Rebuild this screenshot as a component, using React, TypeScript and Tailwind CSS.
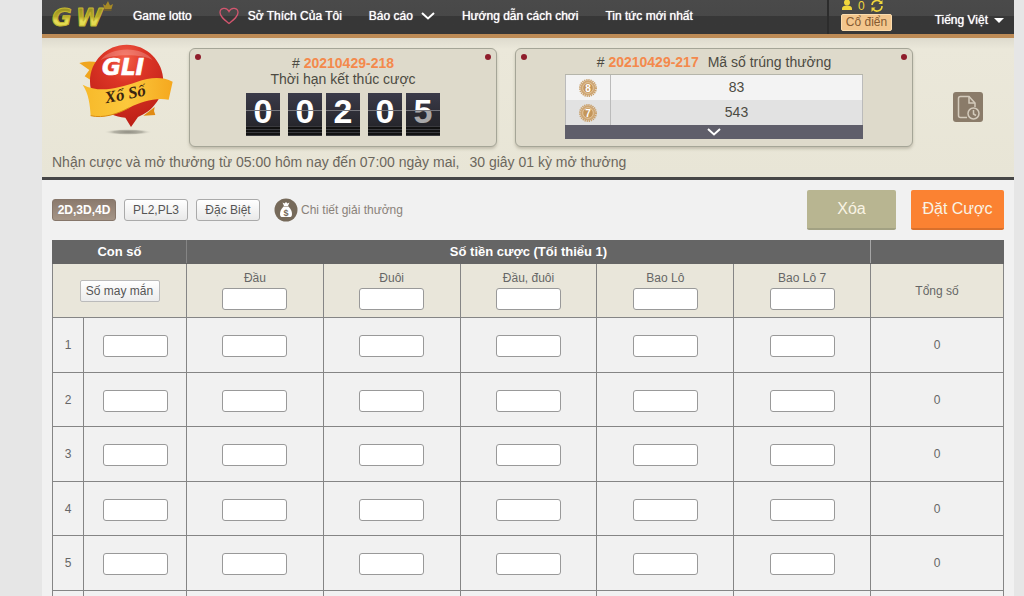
import React from "react";

const betTypes = ["Đầu", "Đuôi", "Đầu, đuôi", "Bao Lô", "Bao Lô 7"];
const rows = [1, 2, 3, 4, 5];

const inputClass =
  "block h-[22px] w-[65px] mx-auto rounded-[3px] border border-[#999] bg-white px-1 text-center text-xs text-[#444] outline-none";
const tabClass =
  "h-[22px] w-16 rounded-[3px] border border-[#aaa] bg-linear-to-b from-white to-[#e9e9e9] text-xs text-[#555] whitespace-nowrap";

function BrandLogo() {
  return (
    <svg className="w-[64px] h-[34px] shrink-0 overflow-visible" viewBox="0 0 64 34" aria-label="GW" role="img">
      <defs>
        <linearGradient id="gold" x1="0" y1="0" x2="0" y2="1">
          <stop offset="0" stopColor="#8d8420" />
          <stop offset="0.45" stopColor="#b5a928" />
          <stop offset="0.6" stopColor="#e8de58" />
          <stop offset="1" stopColor="#d9cf3c" />
        </linearGradient>
      </defs>
      <g
        fill="url(#gold)"
        stroke="#c3b730"
        strokeWidth="1"
        strokeLinejoin="round"
        className="text-[24px] font-bold italic font-['DejaVu_Sans',sans-serif]"
      >
        <text x="2" y="26">
          G
        </text>
        <text x="26" y="26">
          W
        </text>
      </g>
      <path d="M53 4l2.500 1.500L58 1l2 4.500L63 4l-1.500 5h-7z" fill="#a78a26" />
      <path d="M54 10h7.500" stroke="#8a6d1f" strokeWidth="1" />
    </svg>
  );
}

function LotteryBadge() {
  return (
    <svg className="w-[100px] h-[95px] shrink-0" viewBox="105 20 300 285" role="img" aria-label="GLI Xổ Số">
      <defs>
        <radialGradient id="ball" cx="0.48" cy="0.18" r="0.8">
          <stop offset="0" stopColor="#f4604a" />
          <stop offset="0.35" stopColor="#dc3526" />
          <stop offset="1" stopColor="#bd1f16" />
        </radialGradient>
        <linearGradient id="ribbon" x1="0" y1="0" x2="1" y2="0">
          <stop offset="0" stopColor="#f7b92a" />
          <stop offset="0.5" stopColor="#fcc83c" />
          <stop offset="1" stopColor="#f5a81f" />
        </linearGradient>
        <radialGradient id="shade">
          <stop offset="0" stopColor="#8d8b80" />
          <stop offset="0.6" stopColor="#b5b3a6" />
          <stop offset="1" stopColor="#e5e2d4" stopOpacity="0" />
        </radialGradient>
      </defs>
      <ellipse cx="264" cy="287" rx="72" ry="9" fill="url(#shade)" />
      <path d="M118 80Q140 72 176 78L166 140 134 120 148 101z" fill="#f0a51e" />
      <path d="M310 238l34-26-2 12 4 12z" fill="#e08a14" />
      <path
        d="M260 25C320 25 370 74 370 135C370 185 336 226 294 242L273 272L256 244C196 240 150 196 150 135C150 74 200 25 260 25z"
        fill="url(#ball)"
      />
      <path d="M182 72C210 30 310 28 338 72C310 52 214 52 182 72z" fill="#fff" opacity="0.22" />
      <text
        x="186"
        y="117"
        fill="#fff"
        stroke="#fff"
        strokeWidth="2"
        className="text-[69px] font-bold italic font-['DejaVu_Sans',sans-serif]"
      >
        GLI
      </text>
      <path
        d="M128 145C180 172 235 155 290 137C330 123 365 120 398 136L386 190C345 183 305 196 268 214C232 233 190 247 152 238C150 205 146 172 128 145z"
        fill="url(#ribbon)"
      />
      <path d="M152 238C190 247 232 233 268 214" stroke="#d98b12" strokeWidth="3" fill="none" />
      <text
        x="198"
        y="201"
        transform="rotate(-11 198 201)"
        fill="#3a2410"
        className="text-[50px] font-bold italic font-['Liberation_Serif',serif]"
      >
        Xổ Số
      </text>
    </svg>
  );
}

function Chevron({ className }: { className: string }) {
  return (
    <svg className={className} viewBox="0 0 14 8" fill="none" stroke="currentColor" strokeWidth="2">
      <path d="M1 1l6 5.500L13 1" />
    </svg>
  );
}

function Medal({ n }: { n: number }) {
  return (
    <svg className="w-5 h-5 mx-auto" viewBox="0 0 20 20">
      <circle cx="10" cy="10" r="8" fill="none" stroke="#c9a06b" strokeWidth="2" strokeDasharray="1.300 0.800" />
      <circle cx="10" cy="10" r="7.500" fill="#cfa672" />
      <circle cx="10" cy="10" r="5.300" fill="#c4965a" stroke="#ecd6b4" strokeWidth="0.700" />
      <text x="10" y="13.500" textAnchor="middle" fill="#fff" className="text-[10px] font-bold">
        {n}
      </text>
    </svg>
  );
}

function Digit({ value, flipping = false }: { value: string; flipping?: boolean }) {
  return (
    <span className="relative flex h-[43px] w-[34px] justify-center overflow-hidden bg-linear-to-b from-[#3b3b49] to-[#202024] text-[34px] leading-[36px] font-bold text-white">
      {value}
      {flipping && <span className="absolute inset-x-0 top-[18px] h-[14px] bg-[#26262a]/40" />}
      <span className="absolute inset-x-0 top-[17px] h-px bg-[#77777d]" />
      <span className="absolute inset-x-0 bottom-0 h-[10px] bg-[repeating-linear-gradient(to_bottom,#3a3a3e_0px,#3a3a3e_1px,#111_1px,#111_3px)]" />
    </span>
  );
}

function Pins() {
  return (
    <>
      <span className="absolute left-[5px] top-[5px] size-[6px] rounded-full bg-[#8f1d2c]" />
      <span className="absolute right-[5px] top-[5px] size-[6px] rounded-full bg-[#8f1d2c]" />
    </>
  );
}

const cardClass =
  "relative h-[99px] rounded-[6px] border border-[#a5a597] bg-[#dedacb] text-center text-sm leading-4 text-[#4c4a42] shadow-[0_2px_3px_rgba(120,115,95,0.35)]";

function TopBar() {
  return (
    <header className="flex h-[38px] border-b-4 border-[#bd8b56] bg-linear-to-b from-[#4a4a4a] from-0% via-[#484848] via-47% to-[#373737] to-48% pl-2 text-xs text-white">
      <BrandLogo />
      <nav className="ml-[19px] flex h-[31px] flex-1 items-center gap-[27px] whitespace-nowrap text-shadow-[0_0_1px_#fff]">
        <a href="#lotto">Game lotto</a>
        <a href="#favorites" className="flex items-center gap-[9px]">
          <svg className="w-5 h-[18px]" viewBox="0 0 20 18" fill="none" stroke="#d4566f" strokeWidth="1.300">
            <path d="M10 16.500C5 12.500 1 9.500 1 5.500C1 1 7.500-0.500 10 4.500C12.500-0.500 19 1 19 5.500C19 9.500 15 12.500 10 16.500z" />
          </svg>
          Sở Thích Của Tôi
        </a>
        <a href="#report" className="flex items-center gap-2">
          Báo cáo
          <Chevron className="w-[14px] h-2" />
        </a>
        <a href="#guide">Hướng dẫn cách chơi</a>
        <a href="#news">Tin tức mới nhất</a>
      </nav>
      <div className="flex w-[187px] border-l-2 border-[#2c2c2c] pl-3 pr-[10px]">
        <div className="flex-1">
          <div className="flex h-[14px] items-start gap-[5px] leading-[10px] text-[#f0d63c]">
            <svg className="h-[10px] w-3" viewBox="0 0 12 10" fill="currentColor">
              <circle cx="6" cy="2.500" r="3" />
              <path d="M1 10V8.500C1 6.500 3 5.500 6 5.500S11 6.500 11 8.500V10z" />
            </svg>
            <span className="text-xs leading-[14px] -mt-px">0</span>
            <svg className="h-3 w-[14px]" viewBox="0 0 14 12" fill="none" stroke="currentColor" strokeWidth="1.600">
              <path d="M2 5A5 5 0 0 1 11 2.500M12 6A5 5 0 0 1 3 9" />
              <path d="M12.500 0v4h-4zM1.500 12V7.500h4z" fill="currentColor" stroke="none" />
            </svg>
          </div>
          <button className="h-[17px] w-[51px] rounded-[2px] border border-[#fbdcae] bg-[#f3c68d] text-xs leading-[15px] text-[#855b32]">
            Cổ điển
          </button>
        </div>
        <button className="mt-[10px] flex h-5 items-center gap-[6px] whitespace-nowrap text-shadow-[0_0_1px_#fff]">
          Tiếng Việt
          <span className="border-x-[5px] border-t-[5px] border-x-transparent border-t-white" />
        </button>
      </div>
    </header>
  );
}

function DrawPanel() {
  return (
    <section className="h-[142px] border-b-[3px] border-[#464646] bg-linear-to-b from-[#dedbce] from-0% via-[#ebe8da] via-8% to-[#e8e5d6] px-[10px] pt-[5px]">
      <div className="flex h-[110px]">
        <div className="w-[137px] shrink-0 pl-[23px]">
          <LotteryBadge />
        </div>
        <div className={`${cardClass} mt-[5px] w-[308px] shrink-0 pt-[6px]`}>
          <Pins />
          <p>
            # <b className="text-[14px] text-[#f4894c]">20210429-218</b>
          </p>
          <p>Thời hạn kết thúc cược</p>
          <div className="mt-[6px] flex justify-center gap-2">
            <Digit value="0" />
            <div className="flex gap-1">
              <Digit value="0" />
              <Digit value="2" />
            </div>
            <div className="flex gap-1">
              <Digit value="0" />
              <Digit value="5" flipping />
            </div>
          </div>
        </div>
        <div className={`${cardClass} ml-[18px] mt-[5px] w-[398px] shrink-0 pt-[5px]`}>
          <Pins />
          <p>
            # <b className="text-[#f4894c]">20210429-217</b>
            <span className="ml-[9px]">Mã số trúng thưởng</span>
          </p>
          <div className="mx-auto mt-1 w-[298px] border-t border-[#b5b5aa]">
            <table className="w-full border-collapse">
              <tbody>
                <tr className="h-[25px] bg-[#f3f3f3]">
                  <td className="w-[45px] border-x border-[#bbb]">
                    <Medal n={8} />
                  </td>
                  <td className="border-r border-[#bbb] pb-[2px]">83</td>
                </tr>
                <tr className="h-[25px] bg-[#e2e2e2]">
                  <td className="border-x border-[#bbb]">
                    <Medal n={7} />
                  </td>
                  <td className="border-r border-[#bbb] pb-[2px]">543</td>
                </tr>
              </tbody>
            </table>
            <button aria-label="Xem thêm" className="flex h-[14px] w-full justify-center bg-[#5f5e6a] pt-[3px] text-white">
              <Chevron className="h-2 w-[14px]" />
            </button>
          </div>
        </div>
        <div className="flex flex-1 items-center justify-end pr-[21px] pt-[18px]">
          <button aria-label="Lịch sử" className="size-[30px] rounded-[3px] bg-[#8a7b69]">
            <svg className="size-[30px]" viewBox="0 0 30 30" fill="none" stroke="#d3cabb" strokeWidth="1.500">
              <path d="M14 25.500H7.500C6 25.500 5.500 25 5.500 23.500V6.500C5.500 5 6 4.500 7.500 4.500H16L22 11V15" />
              <path d="M16 4.500V11H22" />
              <circle cx="20.500" cy="21.500" r="5.500" />
              <path d="M20.500 18v4l2.500 1.500" />
            </svg>
          </button>
        </div>
      </div>
      <p className="text-sm leading-[18px] text-[#6c675d]">
        Nhận cược và mở thưởng từ 05:00 hôm nay đến 07:00 ngày mai,<span className="ml-[10px]">30 giây 01 kỳ mở thưởng</span>
      </p>
    </section>
  );
}

function Toolbar() {
  return (
    <div className="flex h-[60px] items-center px-[10px]">
      <div className="flex gap-2">
        <button className="h-[22px] w-16 rounded-[3px] border border-[#86766a] bg-linear-to-b from-[#8b7a6d] to-[#a59587] text-xs font-bold text-white">
          2D,3D,4D
        </button>
        <button className={tabClass}>PL2,PL3</button>
        <button className={tabClass}>Đặc Biệt</button>
      </div>
      <a href="#prizes" className="ml-[14px] flex items-center gap-[3px] text-xs text-[#8a8279]">
        <svg className="size-6" viewBox="0 0 24 24">
          <circle cx="12" cy="12" r="11.500" fill="#766a5a" />
          <path d="M8.500 4.500l2 1L12 4l1.500 1.500 2-1-1.500 3.500h-4z" fill="#fff" />
          <path d="M9.500 8.500h5C17 11 18 13.500 18 16C18 18.500 17 19 15.500 19h-7C7 19 6 18.500 6 16C6 13.500 7 11 9.500 8.500z" fill="#fff" />
          <text x="12" y="17.500" textAnchor="middle" fill="#766a5a" className="text-[9px] font-bold">
            $
          </text>
        </svg>
        Chi tiết giải thưởng
      </a>
      <div className="-mt-px ml-auto flex gap-[15px] text-base text-[#f8f3e4] text-shadow-[0_0_1px_#f8f3e4]">
        <button className="h-10 w-[89px] rounded-[2px] border-b-2 border-[#a2a183] bg-[#b8b591]">Xóa</button>
        <button className="h-10 w-[93px] rounded-[2px] border-b-2 border-[#d9702c] bg-[#fb8232] whitespace-nowrap">
          Đặt Cược
        </button>
      </div>
    </div>
  );
}

function BetTable() {
  const cell = "border border-[#858585] p-0";
  return (
    <div className="px-[10px]">
      <table className="w-full table-fixed border-collapse text-center text-xs text-[#666]">
        <colgroup>
          <col className="w-[31px]" />
          <col className="w-[103px]" />
          {betTypes.map((type) => (
            <col key={type} />
          ))}
          <col className="w-[133px]" />
        </colgroup>
        <thead>
          <tr className="h-[23px] bg-[#656565] text-[13px] leading-5 text-white">
            <th colSpan={2} className="border border-[#656565] border-r-[#858585] p-0 font-bold">
              Con số
            </th>
            <th colSpan={5} className="border border-[#656565] border-r-[#a5a5a5] p-0 font-bold">
              Số tiền cược (Tối thiểu 1)
            </th>
            <th className="border border-[#656565] p-0" />
          </tr>
          <tr className="h-[54px] bg-[#e9e6da]">
            <td colSpan={2} className={cell}>
              <button className="h-[22px] w-20 rounded-[2px] border border-[#bbb] bg-linear-to-b from-white to-[#ececec] text-xs whitespace-nowrap text-[#555]">
                Số may mắn
              </button>
            </td>
            {betTypes.map((type) => (
              <td key={type} className={`${cell} pb-[3px]`}>
                <label className="block leading-[18px]">
                  {type}
                  <input className={`${inputClass} mt-px`} />
                </label>
              </td>
            ))}
            <td className={cell}>Tổng số</td>
          </tr>
        </thead>
        <tbody>
          {rows.map((n) => (
            <tr key={n} className="odd:h-[55px] even:h-[54px]">
              <td className={cell}>{n}</td>
              <td className={`${cell} pt-[2px]`}>
                <input aria-label={`Con số ${n}`} className={inputClass} />
              </td>
              {betTypes.map((type) => (
                <td key={type} className={`${cell} pt-[2px]`}>
                  <input aria-label={`${type} ${n}`} className={inputClass} />
                </td>
              ))}
              <td className={cell}>0</td>
            </tr>
          ))}
        </tbody>
        <tfoot>
          <tr className="h-[54px]">
            <td className={cell} />
            <td className={cell} />
            {betTypes.map((type) => (
              <td key={type} className={cell} />
            ))}
            <td className={cell} />
          </tr>
        </tfoot>
      </table>
    </div>
  );
}

export default function App() {
  return (
    <div className="h-screen overflow-hidden bg-[#e6e6e6] pl-[42px] pr-[10px] font-['Liberation_Sans',Arial,sans-serif]">
      <main className="min-h-full bg-[#f1f1f1]">
        <TopBar />
        <DrawPanel />
        <Toolbar />
        <BetTable />
      </main>
    </div>
  );
}
